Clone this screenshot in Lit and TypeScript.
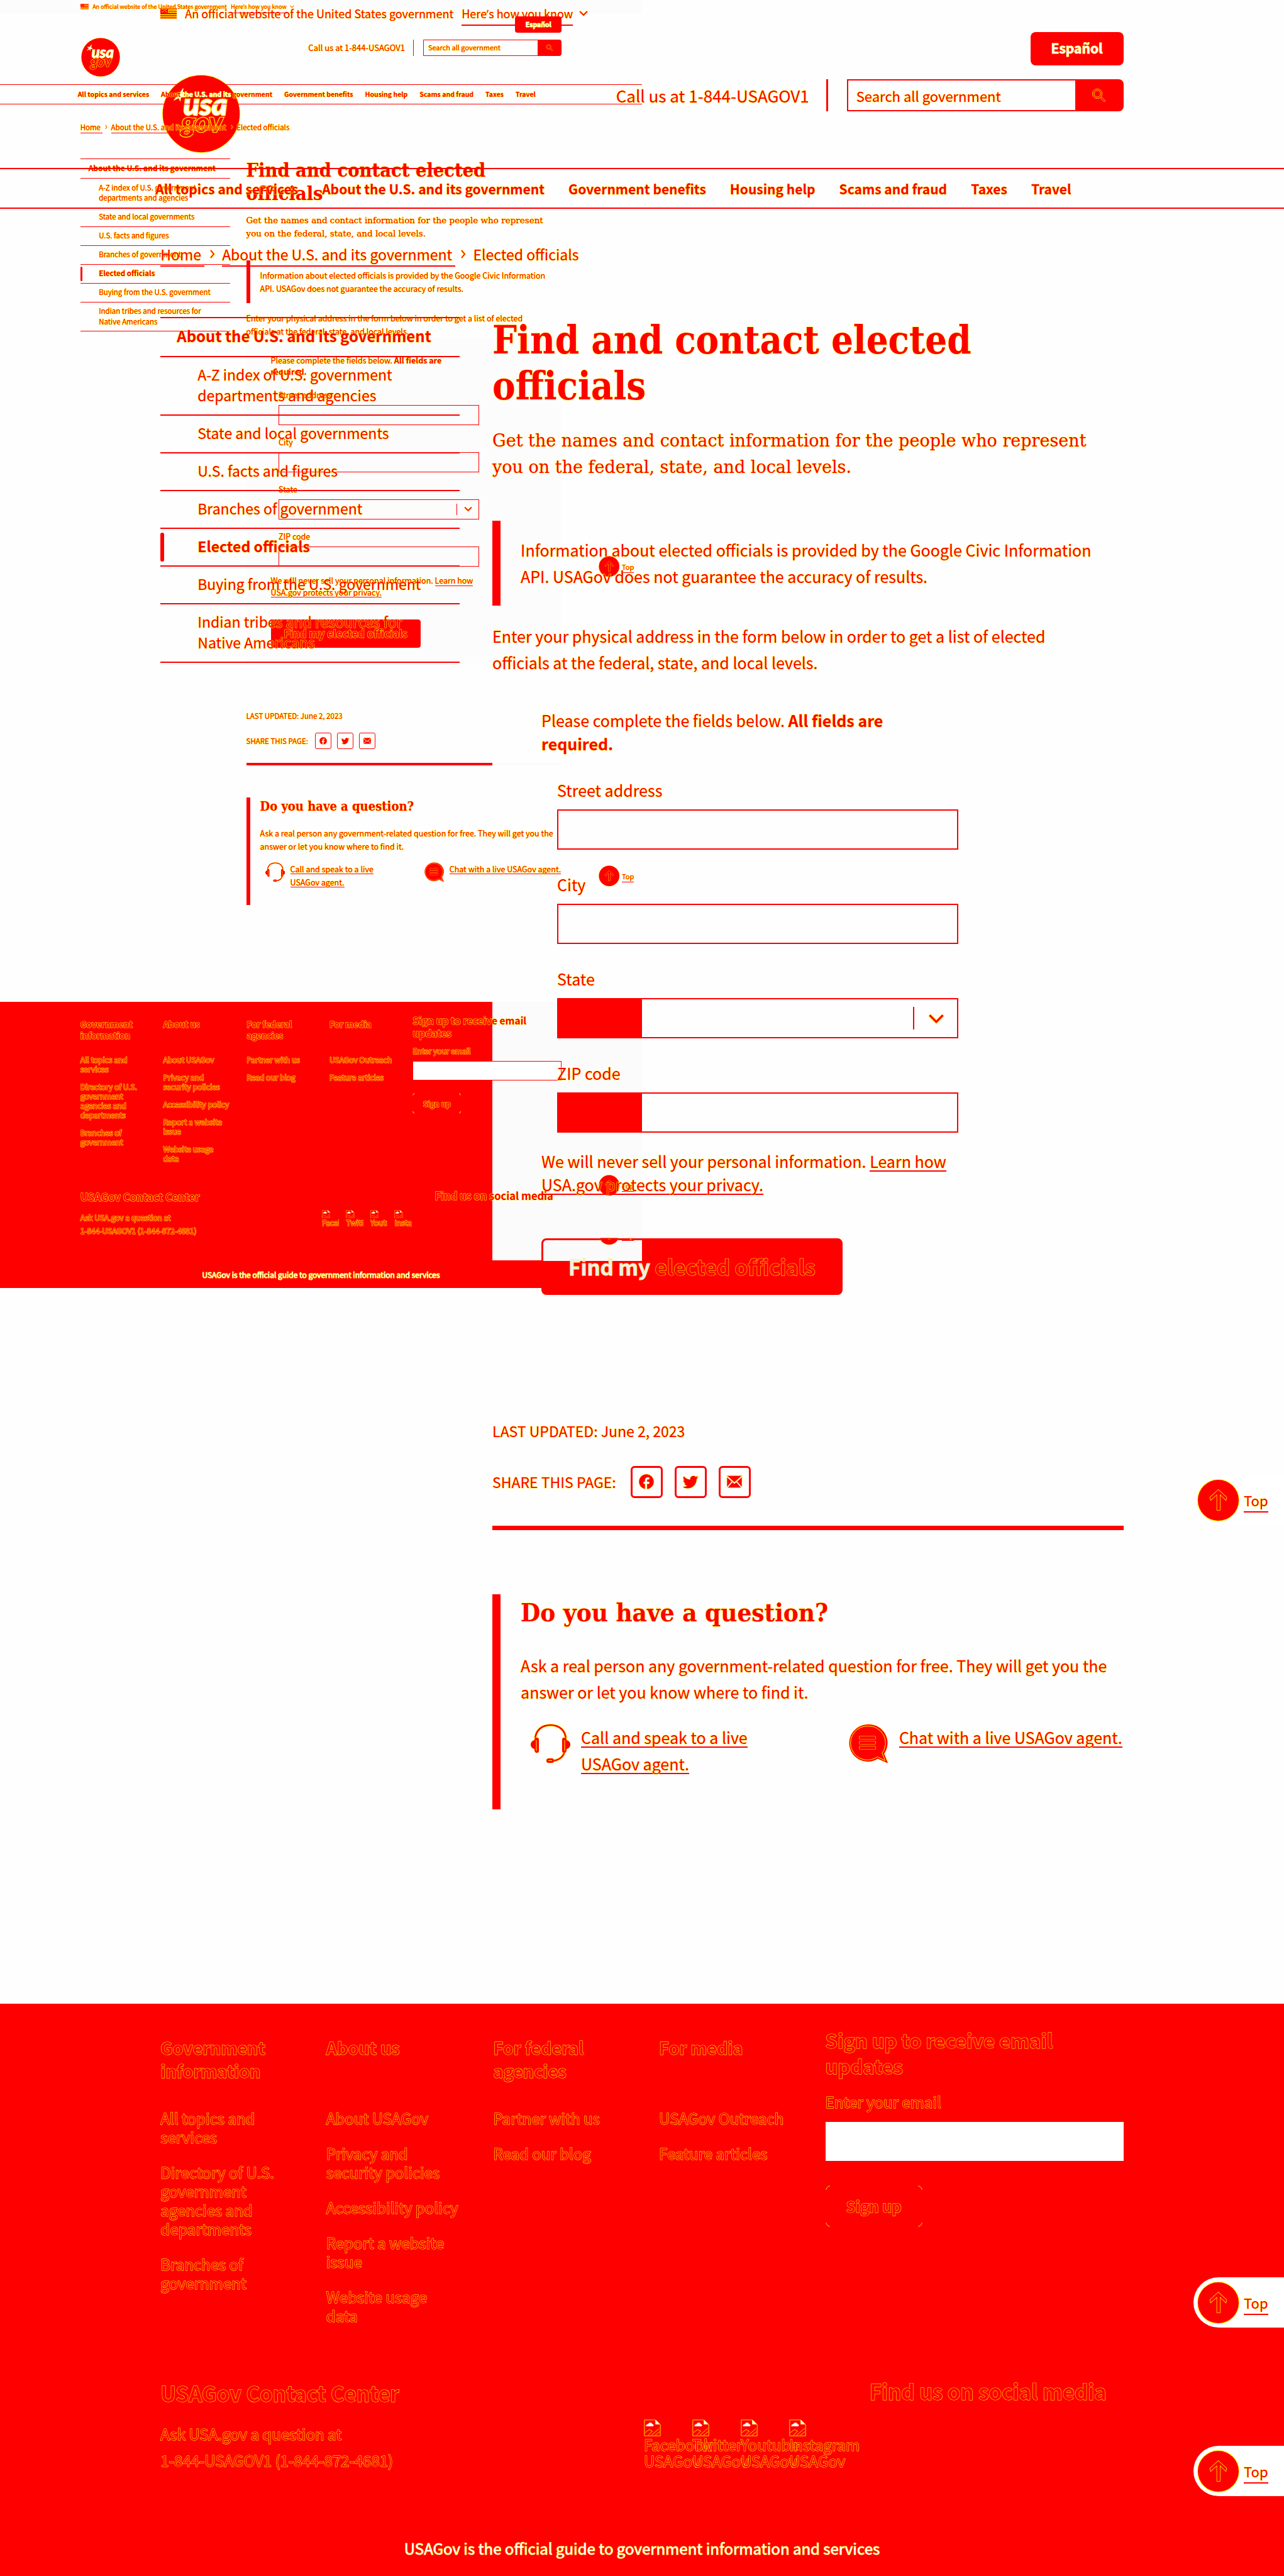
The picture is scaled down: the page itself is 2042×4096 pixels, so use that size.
import { LitElement, html, css, svg, nothing } from "lit";
import { customElement, property } from "lit/decorators.js";

const topics = [
  "All topics and services",
  "About the U.S. and its government",
  "Government benefits",
  "Housing help",
  "Scams and fraud",
  "Taxes",
  "Travel",
];

const sideLinks = [
  "A-Z index of U.S. government departments and agencies",
  "State and local governments",
  "U.S. facts and figures",
  "Branches of government",
  "Elected officials",
  "Buying from the U.S. government",
  "Indian tribes and resources for Native Americans",
];

const footerColumns = [
  {
    title: "Government information",
    links: [
      "All topics and services",
      "Directory of U.S. government agencies and departments",
      "Branches of government",
    ],
  },
  {
    title: "About us",
    links: [
      "About USAGov",
      "Privacy and security policies",
      "Accessibility\u00a0policy",
      "Report a website issue",
      "Website usage data",
    ],
  },
  { title: "For federal agencies", links: ["Partner with us", "Read our blog"] },
  { title: "For media", links: ["USAGov Outreach", "Feature articles"] },
];

const networks = ["Facebook", "Twitter", "Youtube", "Instagram"];

const icons = {
  flag: svg`<svg class="flag" viewBox="0 0 32 22" aria-hidden="true">
    <rect width="32" height="22" fill="#ff0"/>
    <path d="M0 1h32v3H0zM16 6h16v2H16zM0 10h32v3H0zM0 15h32v2H0zM0 19h32v2H0z" fill="#f00"/>
    <path d="M0 1h15v11H0z" fill="#f00"/>
    <path d="M2 2l2 2 2-2M7 4l2 2 3-3M2 7l3 2 2-3M9 9l2-2 2 3" fill="none" stroke="#ff0"/>
  </svg>`,
  logo: svg`<svg class="logo" viewBox="0 0 156 156" role="img" aria-label="USAGov logo">
    <circle cx="78" cy="78" r="77" fill="#f00" stroke="#ff0" stroke-width="2"/>
    <path d="M42 27l-2 12 6 5-9 1-1 7-3-6-10 5 8-9-6-4 10-1z" fill="#fff" stroke="#ff0" stroke-width="1.3"/>
    <g font-family="Lato, sans-serif" font-style="italic" stroke="#ff0" paint-order="stroke">
      <text x="42" y="80" font-size="60" font-weight="900" fill="#fff" stroke-width="3">usa</text>
      <text x="38" y="115" font-size="56" font-weight="700" fill="#f00" stroke-width="3">gov</text>
    </g>
  </svg>`,
  search: svg`<svg class="i28" viewBox="0 0 24 24" aria-hidden="true">
    <path d="M15.5 14h-.8l-.3-.3A6.5 6.5 0 1 0 13.700 14.400l.3.300v.8l5 5 1.500-1.500zM9.500 14a4.500 4.500 0 1 1 0-9 4.500 4.500 0 0 1 0 9z" fill="none" stroke="#ff0" stroke-width="0.7"/>
  </svg>`,
  chevronDown: svg`<svg class="chev" viewBox="0 0 24 16" aria-hidden="true">
    <path d="M2 3l10 10L22 3" fill="none" stroke="#ff0" stroke-width="5"/>
    <path d="M2 3l10 10L22 3" fill="none" stroke="#f00" stroke-width="3"/>
  </svg>`,
  chevronRight: svg`<svg class="crumb-sep" viewBox="0 0 8 16" aria-hidden="true">
    <path d="M1 2l5 6-5 6" fill="none" stroke="#ff0" stroke-width="3"/>
    <path d="M1 2l5 6-5 6" fill="none" stroke="#f00" stroke-width="1.600"/>
  </svg>`,
  facebook: svg`<svg class="i28" viewBox="0 0 24 24" aria-hidden="true"><path class="glyph" d="M22 12c0-5.520-4.480-10-10-10S2 6.480 2 12c0 4.840 3.440 8.870 8 9.800V15H8v-3h2V9.500C10 7.570 11.570 6 13.500 6H16v3h-2c-.55 0-1 .45-1 1v2h3v3h-3v6.950c5.050-.5 9-4.760 9-9.950z"/></svg>`,
  twitter: svg`<svg class="i28" viewBox="0 0 24 24" aria-hidden="true"><path class="glyph" d="M22.460 6c-.77.35-1.600.58-2.460.69.88-.53 1.560-1.370 1.880-2.380-.83.5-1.750.85-2.720 1.050C18.370 4.500 17.260 4 16 4c-2.350 0-4.270 1.920-4.270 4.290 0 .34.04.67.11.98C8.280 9.090 5.110 7.380 3 4.790c-.37.63-.58 1.370-.58 2.150 0 1.490.75 2.810 1.910 3.560-.71 0-1.370-.2-1.950-.5v.03c0 2.080 1.480 3.820 3.440 4.210a4.220 4.220 0 0 1-1.930.07 4.280 4.280 0 0 0 4 2.980 8.521 8.521 0 0 1-5.330 1.840c-.34 0-.68-.02-1.020-.06C3.440 20.290 5.700 21 8.120 21 16 21 20.330 14.460 20.330 8.790c0-.19 0-.37-.01-.56.84-.6 1.560-1.360 2.140-2.230z"/></svg>`,
  mail: svg`<svg class="i28" viewBox="0 0 24 24" aria-hidden="true">
    <rect class="glyph" x="2" y="4" width="20" height="16"/>
    <path d="M2 5l10 9 10-9M2 20l7-8M22 20l-7-8" fill="none" stroke="#fff" stroke-width="1.500"/>
    <path d="M2 4l10 9 10-9" fill="none" stroke="#ff0" stroke-width="0.7"/>
  </svg>`,
  headset: svg`<svg class="i63" viewBox="0 0 63 63" aria-hidden="true">
    <g fill="none">
      <path d="M7 26C7 10 18 2 31.500 2S56 10 56 26M54 44c-2 9-10 14-20 15" stroke="#ff0" stroke-width="4"/>
      <path d="M7 26C7 10 18 2 31.500 2S56 10 56 26M54 44c-2 9-10 14-20 15" stroke="#f00" stroke-width="2.500"/>
    </g>
    <g fill="#f00" stroke="#ff0">
      <path d="M7 22h3c2 0 3 1 3 4v17c0 2-1 3-3 3-3 0-4-2-4-6-4-1-6-4-6-7s2-6 6-7z"/>
      <path d="M56 22h-3c-2 0-3 1-3 4v17c0 2 1 3 3 3 3 0 4-2 4-6 4-1 6-4 6-7s-2-6-6-7z"/>
      <path d="M9 26v17M54 26v17" fill="none"/>
      <rect x="25" y="55" width="12" height="7" rx="3.500"/>
      <path d="M28 58.500h6" fill="none"/>
    </g>
  </svg>`,
  chat: svg`<svg class="i63" viewBox="0 0 63 63" aria-hidden="true">
    <path d="M30 1a29.500 29.500 0 1 0 12 56.500l4-2 16 7-6-15A29.500 29.500 0 0 0 30 1z" fill="#f00" stroke="#ff0"/>
    <path d="M30 3.500a27 27 0 1 0 11 51.500l4.500-2.500 12 6-4.500-12A27 27 0 0 0 30 3.500z" fill="none" stroke="#ff0"/>
    <path d="M17 20h25v4H17zM17 28h25v4H17zM17 36h25v4H17z" fill="#f00" stroke="#ff0" stroke-width="1.200"/>
  </svg>`,
  arrowUp: svg`<svg class="disc" viewBox="0 0 67 67" aria-hidden="true">
    <circle cx="33.500" cy="33.500" r="32.500" fill="#f00" stroke="#ff0" stroke-width="2"/>
    <path d="M31.500 49V24l-10 9-1-4 13-12 13 12-1 4-9.500-9v25z" fill="#f00" stroke="#ff0" stroke-width="1.500"/>
  </svg>`,
  broken: svg`<svg class="broken-icon" viewBox="0 0 32 32" aria-hidden="true">
    <path d="M1 31V1h20l10 9v21z" fill="none" stroke="#ff0"/>
    <path d="M4 13c0-4 3-4 4-4 1-4 7-4 8 0 3 0 3 4 1 4z" fill="#fff"/>
    <path d="M22 1v8h8z" fill="#fff" stroke="#ff0"/>
    <path d="M2 25l8-6 6 3-8 8M14 30l15-13M21 30l9-7" fill="none" stroke="#ff0"/>
  </svg>`,
};

@customElement("usa-page")
export class UsaPage extends LitElement {
  @property({ type: Boolean, reflect: true }) half = false;

  static styles = css`
    :host {
      display: block;
      color: #f00;
      font-family: "Noto Sans CJK SC", "Open Sans", sans-serif;
      font-size: 25px;
      line-height: 42px;
      -webkit-text-stroke: 1px #ff0;
      paint-order: stroke fill;
      --over: 1;
      --under: 1;
    }
    :host([half]) {
      zoom: 0.5;
      -webkit-text-stroke-width: 2px;
      --over: 2;
      --under: 0;
    }
    * { box-sizing: border-box; }
    h1, h2, h3, p, ul, ol, fieldset { margin: 0; padding: 0; border: 0; font: inherit; }
    ul, ol { list-style: none; }
    a { color: inherit; text-decoration: none; }
    .line { background: linear-gradient(#f00, #f00) no-repeat left 0 bottom 1px / 100% 2px; }
    b { font-weight: 700; }
    svg { display: block; flex: none; }
    button, input, select {
      font: inherit; color: inherit; border-radius: 0; margin: 0;
      -webkit-text-stroke: inherit; paint-order: inherit;
    }
    .wrap { width: 75%; max-width: 1532px; margin: 0 auto; }
    .top { position: relative; z-index: var(--over); }
    .low { position: relative; z-index: var(--under); }

    .banner .wrap { display: flex; align-items: center; height: 42px; font-size: 18px; gap: 13px; }
    .mark { font-family: "Open Sans", sans-serif; line-height: 1; }
    .flag { width: 26px; height: 18px; }
    .banner button { display: flex; align-items: center; gap: 10px; border: 0; padding: 0; background: none; cursor: pointer; }
    .banner .chev { width: 14px; height: 10px; }

    header .wrap { display: flex; justify-content: space-between; align-items: flex-end; padding: 9px 0 24px 3px; }
    .logo { width: 124px; height: 124px; }
    .tools { display: flex; flex-direction: column; align-items: flex-end; gap: 22px; padding-bottom: 66px; }
    .lang {
      height: 53px; padding: 0 33px; border-radius: 8px; background: #f00; color: #fff;
      font-size: 21px; line-height: 51px; font-weight: 700;
    }
    .find { display: flex; align-items: center; height: 51px; }
    .call { padding-right: 27px; margin-right: 30px; border-right: 3px solid #f00; font-size: 26px; line-height: 51px; }
    .find form { display: flex; height: 51px; font-size: 22px; }
    .find input { width: 363px; border: 2px solid #f00; border-right: 0; padding: 0 13px; background: none; }
    ::placeholder { color: #f00; opacity: 1; }
    .find button { width: 77px; border: 0; border-radius: 0 8px 8px 0; background: #f00; display: grid; place-items: center; }
    .i28 { width: 28px; height: 28px; }
    .glyph { fill: #f00; stroke: #ff0; stroke-width: 1; paint-order: stroke; }

    nav.topics { border: solid #f00; border-width: 2px 0; }
    .topics ul { display: flex; gap: 38px; margin-left: -8px; height: 61px; align-items: center; font-size: 21px; font-weight: 700; white-space: nowrap; }
    .knock { color: #fff; }
    .crumbs ol { display: flex; align-items: center; gap: 11px; padding: 51px 0 79px; font-size: 23px; }
    .crumbs li { display: flex; align-items: center; gap: 9px; white-space: pre; }
    .crumb-sep { width: 8px; height: 16px; }

    .columns { display: grid; grid-template-columns: 476fr 1004fr; gap: 52px; align-items: start; }
    .side { border-bottom: 2px solid #f00; font-size: 23px; line-height: 33px; }
    .side li { border-top: 2px solid #f00; padding: 11px 24px 14px 59px; position: relative; }
    .side li.title { font-size: 24px; font-weight: 700; padding: 11px 0 16px 26px; }
    .side li.current { font-weight: 700; }
    .side li.current::before {
      content: ""; position: absolute; left: 0; top: 6px; bottom: 6px; width: 6px; border-radius: 3px; background: #f00;
    }

    h1, h2 { font-family: "DejaVu Serif Condensed", "DejaVu Serif", serif; }
    h1 { font-size: 61px; line-height: 73px; font-weight: 700; padding-right: 150px; }
    .intro { font-family: "DejaVu Serif", serif; font-size: 27px; margin-top: 30px; padding-right: 40px; }
    .callout { margin-top: 64px; border-left: 13px solid #f00; padding: 25px 32px 26px; }
    .lead { margin-top: 27px; padding-right: 60px; }
    .panel { padding: 53px 0 50px 78px; line-height: 37px; }
    :host([half]) .panel { background: #fcfcfc; }
    .narrow { max-width: 655px; }
    fieldset { padding-left: 25px; max-width: 663px; }
    .field { display: grid; gap: 12px; margin-top: 37px; }
    .field input, .field select {
      width: 100%; height: 64px; border: 2px solid #f00; padding: 0 12px; background: none; appearance: none;
    }
    .pick { display: grid; align-items: center; }
    .pick > * { grid-area: 1 / 1; }
    .pick .handle {
      justify-self: end; width: 72px; height: 36px; border-left: 2px solid #f00; pointer-events: none;
      display: grid; place-items: center;
    }
    .chev { width: 26px; height: 17px; }
    :host(:not([half])) .field .shade { background: linear-gradient(#f00, #f00) no-repeat left bottom / 133px 100%; }
    .privacy { margin-top: 27px; }
    .submit {
      margin-top: 67px; height: 90px; padding: 0 40px; border: 3px solid #f00; border-radius: 8px;
      background: #f00; font-size: 33px; font-weight: 700; color: #f00;
    }
    :host(:not([half])) .submit { background: #f00 linear-gradient(#fafafa, #fafafa) no-repeat left top / 157px 33px; }
    :host(:not([half])) .submit .knock { color: #eee; }
    :host([half]) .submit .knock { color: #f00; }

    .updated { margin-top: 150px; line-height: 32px; font-size: 23px; }
    .share { display: flex; align-items: center; gap: 19px; height: 52px; margin-top: 39px; font-size: 23px; }
    .share span { margin-right: 4px; }
    .share a { width: 51px; height: 51px; border: 3px solid #f00; border-radius: 6px; display: grid; place-items: center; }
    .rule { height: 7px; margin: 44px 0 102px; border: 0; background: #f00; }
    :host([half]) .rule { background: linear-gradient(to right, #f00 78%, #fbfbfb 78%); }
    .question { border-left: 13px solid #f00; padding: 4px 0 52px 32px; }
    .question h2 { font-size: 40px; line-height: 50px; font-weight: 700; }
    .question p { margin-top: 38px; }
    .agents { display: grid; grid-template-columns: 505fr 454fr; margin-top: 30px; }
    .agents a { display: flex; gap: 17px; }
    .agents li:first-child { padding: 0 120px 0 16px; }
    .agents li:last-child { padding-left: 17px; white-space: nowrap; }
    .i63 { width: 63px; height: 63px; }

    footer { margin-top: 309px; }
    .foot { background: #f00; }
    :host([half]) .foot { background: linear-gradient(to right, #f00 76.7%, #fbfbfb 76.7%); }
    .foot-grid { display: grid; grid-template-columns: 264fr 264fr 264fr 265fr 475fr; height: 599px; padding-top: 37px; }
    .foot-col { padding: 14px 56px 0 0; font-size: 24px; line-height: 30px; }
    .foot-col h3 { font-size: 27px; line-height: 37px; height: 74px; font-weight: 700; margin-bottom: 42px; }
    .foot-col ul { display: grid; gap: 26px; }
    .mail-list { font-size: 24px; }
    .mail-list h3 { font-size: 31px; line-height: 41px; font-weight: 700; margin-right: 60px; }
    .mail-list label { display: block; margin: 18px 0 14px; line-height: 37px; }
    .mail-list input { display: block; width: 100%; height: 62px; border: 0; background: #fff; padding: 0 12px; }
    :host([half]) .mail-list input { border: 2px solid #f00; }
    .mail-list button {
      position: relative; margin-top: 39px; height: 66px; padding: 0 33px; border: 0; background: none; font-weight: 700;
    }
    .mail-list button::before {
      content: ""; position: absolute; inset: 0; border: 1px solid #ff0; border-radius: 8px;
      --c: linear-gradient(#000, #000);
      mask: var(--c) 0 0 / 7px 7px no-repeat, var(--c) 100% 0 / 7px 7px no-repeat,
        var(--c) 0 100% / 7px 7px no-repeat, var(--c) 100% 100% / 7px 7px no-repeat;
    }
    .contact { display: grid; grid-template-columns: 769fr 763fr; height: 222px; font-size: 24px; }
    .contact h3 { font-size: 33px; line-height: 41px; font-weight: 700; margin-bottom: 23px; }
    .social h3 { text-align: right; padding-right: 27px; margin: -3px 0 24px; }
    .social ul { display: flex; }
    .social li { width: 77px; line-height: 26px; }
    .social a { display: block; }
    :host([half]) .social li { height: 56px; padding-right: 22px; }
    :host([half]) .social a { height: 56px; overflow: hidden; }
    .broken-icon { width: 27px; height: 27px; }
    .strip { background: #f00; color: #fff; text-align: center; padding: 24px 0 23px; font-size: 24px; }

    .to-top {
      position: absolute; right: 0; display: flex; align-items: center; gap: 7px; width: 144px; height: 80px; padding-left: 6px;
      border-radius: 40px 0 0 40px; background: #fff; z-index: var(--under); font-size: 22px;
    }
    :host([half]) .to-top { background: none; }
    .disc { width: 67px; height: 67px; }
    .to-top.clip { clip-path: inset(64% 0 0 0); z-index: var(--over); }
  `;

  private topic(name: string) {
    if (this.half && name.startsWith("About")) {
      return html`About <span class="knock">the U.S. and its</span> government`;
    }
    return name;
  }

  private tops() {
    const places = this.half ? [1762, 2746, 3730, 3886] : [2345, 3621, 3889];
    return places.map(
      (y, i) => html`<a class="to-top ${i === 3 ? "clip" : ""}" href="#top" style="top:${y}px">${icons.arrowUp}<span class="line">Top</span></a>`
    );
  }

  render() {
    return html`
      <div class="banner top">
        <div class="wrap">
          ${icons.flag}<span>An official website of the United States government</span>
          <button type="button"><span class="line">Here<span class="mark">’</span>s how you know</span>${icons.chevronDown}</button>
        </div>
      </div>
      <header class="top">
        <div class="wrap">
          <a href="#home">${icons.logo}</a>
          <div class="tools">
            <a class="lang" href="#es">Español</a>
            <div class="find">
              <span class="call">Call us at 1-844-USAGOV1</span>
              <form role="search">
                <input type="search" aria-label="Search all government" placeholder="Search all government" />
                <button type="button" aria-label="Search">${icons.search}</button>
              </form>
            </div>
          </div>
        </div>
      </header>
      <nav class="topics top" aria-label="Topics">
        <div class="wrap"><ul>${topics.map((t) => html`<li><a href="#topic">${this.topic(t)}</a></li>`)}</ul></div>
      </nav>
      <nav class="crumbs top wrap" aria-label="Breadcrumb">
        <ol>
          <li><a class="line" href="#home">Home </a>${icons.chevronRight}</li>
          <li><a class="line" href="#about">About the U.S. and its government </a>${icons.chevronRight}</li>
          <li>Elected officials</li>
        </ol>
      </nav>
      <div class="columns wrap low">
        <nav aria-label="Section">
          <ul class="side">
            <li class="title"><a href="#about">About the U.S. and its government</a></li>
            ${sideLinks.map(
              (t) => html`<li class=${t === "Elected officials" ? "current" : nothing}><a href="#side">${t}</a></li>`
            )}
          </ul>
        </nav>
        <main>
          <h1>Find and contact elected officials</h1>
          <p class="intro">Get the names and contact information for the people who represent you on the federal, state, and local levels.</p>
          <p class="callout">Information about elected officials is provided by the Google Civic Information API. USAGov does not guarantee the accuracy of results.</p>
          <p class="lead">Enter your physical address in the form below in order to get a list of elected officials at the federal, state, and local levels.</p>
          <form class="panel">
            <p class="narrow">Please complete the fields below. <b>All fields are required.</b></p>
            <fieldset>
              <div class="field"><label for="street">Street address</label><input id="street" type="text" /></div>
              <div class="field"><label for="city">City</label><input id="city" type="text" /></div>
              <div class="field">
                <label for="state">State</label>
                <div class="pick">
                  <select id="state" class="shade"><option></option></select>
                  <span class="handle">${icons.chevronDown}</span>
                </div>
              </div>
              <div class="field"><label for="zip">ZIP code</label><input id="zip" class="shade" type="text" /></div>
            </fieldset>
            <p class="privacy narrow">We will never sell your personal information. <a class="line" href="#privacy">Learn how USA.gov protects your privacy.</a></p>
            <button class="submit" type="button"><span class="knock">Find my</span> elected officials</button>
          </form>
          <p class="updated">LAST UPDATED: June 2, 2023</p>
          <div class="share">
            <span>SHARE THIS PAGE:</span>
            <a href="#fb" aria-label="Facebook">${icons.facebook}</a>
            <a href="#tw" aria-label="Twitter">${icons.twitter}</a>
            <a href="#mail" aria-label="Email">${icons.mail}</a>
          </div>
          <hr class="rule" />
          <section class="question">
            <h2>Do you have a question?</h2>
            <p>Ask a real person any government-related question for free. They will get you the answer or let you know where to find it.</p>
            <ul class="agents">
              <li><a href="#call">${icons.headset}<span><span class="line">Call and speak to a live USAGov agent.</span></span></a></li>
              <li><a href="#chat">${icons.chat}<span><span class="line">Chat with a live USAGov agent.</span></span></a></li>
            </ul>
          </section>
        </main>
      </div>
      <footer class="low">
        <div class="foot">
          <div class="foot-grid wrap">
            ${footerColumns.map(
              (c) => html`<section class="foot-col">
                <h3>${c.title}</h3>
                <ul>${c.links.map((l) => html`<li><a href="#foot">${l}</a></li>`)}</ul>
              </section>`
            )}
            <form class="mail-list">
              <h3>Sign up to receive email updates</h3>
              <label for="email">Enter your email</label>
              <input id="email" type="email" />
              <button type="button">Sign up</button>
            </form>
          </div>
          <div class="contact wrap">
            <section>
              <h3>USAGov Contact Center</h3>
              <p>Ask USA.gov a question at</p>
              <p><a href="#call">1-844-USAGOV1 (1-844-872-4681)</a></p>
            </section>
            <section class="social">
              <h3>Find us on social media</h3>
              <ul>${networks.map((n) => html`<li><a href="#social">${icons.broken}${n} USAGov</a></li>`)}</ul>
            </section>
          </div>
        </div>
        <p class="strip">USAGov is the official guide to government information and services</p>
      </footer>
      ${this.tops()}
    `;
  }
}

@customElement("app-root")
export class AppRoot extends LitElement {
  static styles = css`
    :host { display: block; position: relative; overflow: hidden; background: #fefefe; }
    .copy { position: absolute; top: 0; left: 0; width: 50%; background: linear-gradient(#fcfcfc 21px, transparent 21px); }
  `;

  render() {
    return html`
      <div class="copy"><usa-page half></usa-page></div>
      <usa-page></usa-page>
    `;
  }
}
